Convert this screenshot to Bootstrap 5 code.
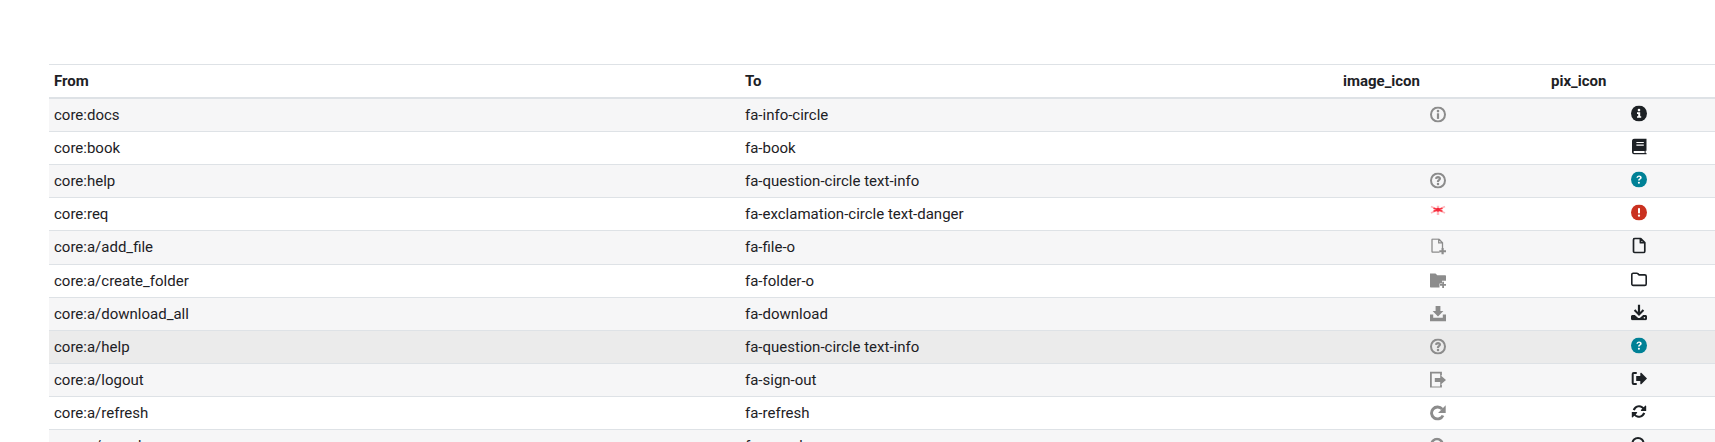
<!DOCTYPE html>
<html lang="en">
<head>
<meta charset="utf-8">
<title>Icon map</title>
<link href="https://cdn.jsdelivr.net/npm/bootstrap@5.3.0/dist/css/bootstrap.min.css" rel="stylesheet">
<style>
html,body{overflow:hidden;height:100%;background:#fff}
.pg{padding:64px 0 0 49px;height:442px;overflow:hidden}
.map{width:1691px;table-layout:fixed;border-collapse:collapse;margin:0;font-family:Roboto,"Liberation Sans",sans-serif;font-size:15px;color:#1d2125}
.map th,.map td{padding:5px;line-height:22.1px;border:0;border-bottom:1px solid #dee2e6;background:transparent;box-shadow:none;color:#1d2125}
.map thead th{border-top:1px solid #dee2e6;border-bottom:2px solid #dee2e6;font-weight:700}
.map tbody tr:nth-child(odd) td{background:#f6f6f7}
.map tbody tr.hov td{background:#ebebeb}
.c1{width:691px}.c2{width:598px}.c3{width:208px}.c4{width:194px}
.ic{display:block;width:16px;height:16px;margin:0 auto;transform:translateX(-4px)}
.img{color:#8c8c8c;transform:translate(-4px,2.5px)}
.pix{transform:translate(-4px,1.500px)}
.info{color:#008196}.dng{color:#ca3120}
</style>
</head>
<body>
<svg width="0" height="0" class="position-absolute">
<defs>
<symbol id="solid-info" viewBox="0 0 16 16"><circle cx="8" cy="8" r="8" fill="currentColor"/><circle cx="8" cy="4.600" r="1.300" fill="#fff"/><path d="M6 6.800h3.200v3.900h1v1.600H6v-1.600h1.200V8.400H6z" fill="#fff"/></symbol>
<symbol id="solid-q" viewBox="0 0 16 16"><circle cx="8" cy="8" r="8" fill="currentColor"/><path d="M5.400 6.300C5.500 4.800 6.600 3.900 8.100 3.900c1.500 0 2.600.9 2.600 2.200 0 1-.6 1.500-1.300 2-.5.3-.7.5-.7 1H7.100c0-1 .4-1.500 1-1.900.5-.3.900-.6.900-1.100 0-.5-.4-.8-1-.8-.6 0-1 .3-1.100 1z" fill="#fff"/><circle cx="7.900" cy="11.200" r="1.050" fill="#fff"/></symbol>
<symbol id="solid-ex" viewBox="0 0 16 16"><circle cx="8" cy="8" r="8" fill="currentColor"/><rect x="7" y="3.600" width="2" height="5.400" rx=".8" fill="#fff"/><circle cx="8" cy="11.200" r="1.150" fill="#fff"/></symbol>
<symbol id="solid-book" viewBox="0 0 16 16"><path d="M3.800 0H15.500v12.200h-.9v2.200h.9V16H3.400C2.100 16 1 15 1 13.600V2.600C1 1.100 2.200 0 3.800 0z" fill="currentColor"/><path d="M3.400 12.600h10.200v1.800H3.400c-.5 0-.9-.4-.9-.9s.4-.9.9-.9z" fill="#fff"/><path d="M5.400 3.400h7.400v1.200H5.400zM5.400 6h7.400v1.200H5.400z" fill="#fff"/></symbol>
<symbol id="reg-file" viewBox="0 0 16 16"><path d="M4 .8h5.500L13.800 5v8.700c0 .8-.7 1.500-1.500 1.500H4c-.8 0-1.500-.7-1.500-1.500V2.300C2.500 1.500 3.200.8 4 .8zM9.400 1v4.200h4.200" fill="none" stroke="currentColor" stroke-width="1.700" stroke-linejoin="round"/></symbol>
<symbol id="reg-folder" viewBox="0 0 16 16"><path d="M2.200 1.700h3.600c.4 0 .7.1 1 .4l1.300 1.300h5.700c.7 0 1.400.6 1.400 1.400v7.700c0 .8-.7 1.400-1.400 1.400H2.200c-.8 0-1.400-.6-1.400-1.400V3.100c0-.8.600-1.400 1.400-1.400z" fill="none" stroke="currentColor" stroke-width="1.600"/></symbol>
<symbol id="solid-down" viewBox="0 0 16 16"><path d="M6.900 0h2.200v7.400l2.600-2.600 1.500 1.500L8 11.500 2.800 6.300l1.500-1.500 2.600 2.600z" fill="currentColor"/><path d="M1.500 10.500h2.300l2.800 2.500c.8.800 2 .8 2.800 0l2.800-2.500h2.300c.8 0 1.500.7 1.500 1.500v2.200c0 .8-.7 1.500-1.500 1.500h-13C.7 15.700 0 15 0 14.200V12c0-.8.7-1.500 1.500-1.500z" fill="currentColor"/><circle cx="13.400" cy="13.300" r=".8" fill="#fff"/></symbol>
<symbol id="solid-out" viewBox="0 0 16 16"><path d="M5 2.500H2.700c-.6 0-1 .4-1 1v9c0 .6.400 1 1 1H5" fill="none" stroke="currentColor" stroke-width="2" stroke-linecap="round"/><path d="M10.300 2.300 16 8l-5.700 5.700c-.3.300-1 .1-1-.5v-2.700H5.200V5.500h4.100V2.800c0-.6.700-.8 1-.5z" fill="currentColor"/></symbol>
<symbol id="solid-ref" viewBox="0 0 16 16"><path d="M1.800 6.300A6.500 6.500 0 0 1 12.700 3.700l1.500-1.500c.3-.3 1-.1 1 .4v4.800H10.400c-.5 0-.8-.6-.4-1l1.300-1.300A4.400 4.400 0 0 0 3.900 6.900zM14.200 9.700A6.500 6.500 0 0 1 3.300 12.300l-1.500 1.500c-.3.300-1 .1-1-.4V8.600h4.800c.5 0 .8.600.4 1l-1.300 1.300a4.400 4.400 0 0 0 7.400-1.800z" fill="currentColor"/></symbol>
<symbol id="solid-search" viewBox="0 0 16 16"><circle cx="7" cy="7" r="5.600" fill="none" stroke="currentColor" stroke-width="2"/><path d="m11 11 4 4" stroke="currentColor" stroke-width="2.200" stroke-linecap="round"/></symbol>
<symbol id="g-info" viewBox="0 0 16 16"><circle cx="8" cy="8" r="7" fill="none" stroke="currentColor" stroke-width="2"/><rect x="6.900" y="6.800" width="2.200" height="5.600" fill="currentColor"/><circle cx="8" cy="4.600" r="1.300" fill="currentColor"/></symbol>
<symbol id="g-q" viewBox="0 0 16 16"><circle cx="8" cy="8" r="7" fill="none" stroke="currentColor" stroke-width="2"/><path d="M5 6.300C5.100 4.700 6.400 3.600 8 3.600c1.700 0 3 1 3 2.500 0 1.100-.6 1.700-1.300 2.100-.5.300-.6.700-.6 1.300H6.900c0-1.100.1-1.800.9-2.300.6-.4.800-.6.800-1S8.400 5.700 8 5.700s-.8.300-.9.800z" fill="currentColor"/><circle cx="8" cy="11.600" r="1.250" fill="currentColor"/></symbol>
<symbol id="g-file" viewBox="0 0 16 16"><path d="M9.500 13.700H2.700c-.5 0-.7-.3-.7-.7V1.200c0-.4.200-.7.700-.7h6.100l3.700 3.700v5.300M8.700.8v3.600h3.600" fill="none" stroke="currentColor" stroke-width="1.300"/><path d="M11.500 9.500h2.200v2.200H16v2h-2.300V16h-2.200v-2.300H9.300v-2h2.200z" fill="currentColor"/></symbol>
<symbol id="g-folder" viewBox="0 0 16 16"><path d="M0 1h5.500l1.800 1.800H15c.6 0 1 .4 1 1v4.400h-4v2.700H9.500V15H1c-.6 0-1-.4-1-1z" fill="currentColor"/><path d="M12.200 9.200h1.800v2.300h2v1.800h-2V15.600h-1.800v-2.300H10v-1.800h2.200z" fill="currentColor"/></symbol>
<symbol id="g-down" viewBox="0 0 16 16"><path d="M5.600.5h4.800v5h3L8 11 2.600 5.500h3z" fill="currentColor"/><path d="M0 9h3.200v3.300h9.600V9H16v7H0z" fill="currentColor"/></symbol>
<symbol id="g-out" viewBox="0 0 16 16"><path d="M11 4V1H.9v15H11v-3" fill="none" stroke="currentColor" stroke-width="1.800"/><path d="M10.200 3.400 16 8.500l-5.800 5.100v-3.100H4.800V6.500h5.400z" fill="currentColor"/></symbol>
<symbol id="g-ref" viewBox="0 0 16 16"><path d="M13 11a6 6 0 1 1-.8-6.300" fill="none" stroke="currentColor" stroke-width="2.900"/><path d="M15.700.8v7.600H8.100z" fill="currentColor"/></symbol>
<symbol id="g-star" viewBox="0 0 16 16"><path d="M1 1 15 7.500M15 1 1 7.500" stroke="#ffb6bc" stroke-width="1.800"/><path d="M8 0v9.500" stroke="#ffb6bc" stroke-width="2.400"/><path d="M3.500 2.800 12.500 5.800M12.500 2.800 3.500 5.800" stroke="#f8323f" stroke-width="1.600"/><circle cx="8" cy="4.300" r="2" fill="#f5283c"/></symbol>
<symbol id="g-search" viewBox="0 0 16 16"><circle cx="7" cy="7" r="5.500" fill="none" stroke="currentColor" stroke-width="2.600"/><path d="m11 11 4 4" stroke="currentColor" stroke-width="2.600"/></symbol>
</defs>
</svg>
<div class="pg">
<table class="table map">
<colgroup><col class="c1"><col class="c2"><col class="c3"><col class="c4"></colgroup>
<thead><tr><th>From</th><th>To</th><th>image_icon</th><th>pix_icon</th></tr></thead>
<tbody>
<tr><td>core:docs</td><td>fa-info-circle</td><td><svg class="ic img"><use href="#g-info"/></svg></td><td><svg class="ic pix"><use href="#solid-info"/></svg></td></tr>
<tr><td>core:book</td><td>fa-book</td><td></td><td><svg class="ic pix"><use href="#solid-book"/></svg></td></tr>
<tr><td>core:help</td><td>fa-question-circle text-info</td><td><svg class="ic img"><use href="#g-q"/></svg></td><td><svg class="ic pix info"><use href="#solid-q"/></svg></td></tr>
<tr><td>core:req</td><td>fa-exclamation-circle text-danger</td><td><svg class="ic img"><use href="#g-star"/></svg></td><td><svg class="ic pix dng"><use href="#solid-ex"/></svg></td></tr>
<tr><td>core:a/add_file</td><td>fa-file-o</td><td><svg class="ic img"><use href="#g-file"/></svg></td><td><svg class="ic pix"><use href="#reg-file"/></svg></td></tr>
<tr><td>core:a/create_folder</td><td>fa-folder-o</td><td><svg class="ic img"><use href="#g-folder"/></svg></td><td><svg class="ic pix"><use href="#reg-folder"/></svg></td></tr>
<tr><td>core:a/download_all</td><td>fa-download</td><td><svg class="ic img"><use href="#g-down"/></svg></td><td><svg class="ic pix"><use href="#solid-down"/></svg></td></tr>
<tr class="hov"><td>core:a/help</td><td>fa-question-circle text-info</td><td><svg class="ic img"><use href="#g-q"/></svg></td><td><svg class="ic pix info"><use href="#solid-q"/></svg></td></tr>
<tr><td>core:a/logout</td><td>fa-sign-out</td><td><svg class="ic img"><use href="#g-out"/></svg></td><td><svg class="ic pix"><use href="#solid-out"/></svg></td></tr>
<tr><td>core:a/refresh</td><td>fa-refresh</td><td><svg class="ic img"><use href="#g-ref"/></svg></td><td><svg class="ic pix"><use href="#solid-ref"/></svg></td></tr>
<tr><td>core:a/search</td><td>fa-search</td><td><svg class="ic img"><use href="#g-search"/></svg></td><td><svg class="ic pix"><use href="#solid-search"/></svg></td></tr>
</tbody>
</table>
</div>
<script src="https://cdn.jsdelivr.net/npm/bootstrap@5.3.0/dist/js/bootstrap.bundle.min.js"></script>
</body>
</html>
